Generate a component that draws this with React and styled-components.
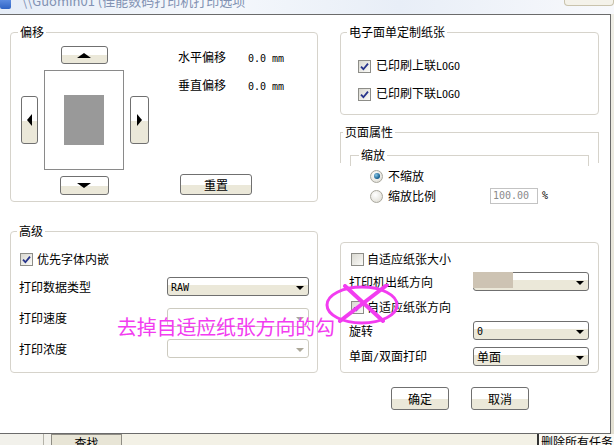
import React from 'react';
import styled, { createGlobalStyle } from 'styled-components';

const UiFont = `"Noto Sans CJK SC", "Liberation Sans", sans-serif`;
const AsciiFont = `"DejaVu Sans Mono", "Liberation Mono", monospace`;
const GroupLine = '#d6d3cb';

const GlobalStyle = createGlobalStyle`
  html, body { margin: 0; padding: 0; background: #fff; }
  body { font-family: ${UiFont}; font-size: 12px; color: #000; }
`;

const Screen = styled.div`
  position: relative;
  width: 614px;
  height: 445px;
  overflow: hidden;
  display: flex;
  flex-direction: column;
  background: #f1f0ea;
  font-family: ${UiFont};
  font-size: 12px;
  line-height: 14px;
`;

const TitleBar = styled.div`
  flex: none;
  height: 14px;
  display: flex;
  align-items: flex-start;
  overflow: hidden;
  background: linear-gradient(90deg, #e6edf7, #f5f8fc 35%, #e8eef7 65%, #f8f9fc);
`;

const TitleIcon = styled.div`
  width: 11px;
  height: 9px;
  background: linear-gradient(#5b8be0, #2f63c4);
  border-radius: 0 0 2px 2px;
`;

const TitleText = styled.div`
  margin-left: 11px;
  margin-top: -7px;
  font-size: 13px;
  line-height: 15px;
  color: #8292b3;
  white-space: nowrap;
`;

const TitleButton = styled.div`
  margin-left: auto;
  width: 48px;
  height: 5px;
  border: 1px solid #c9c3ad;
  border-top: none;
  border-radius: 0 0 4px 4px;
  background: #f4f2ea;
`;

const Middle = styled.div`
  flex: none;
  height: 420px;
  display: flex;
`;

const Dialog = styled.div`
  width: 611px;
  box-sizing: border-box;
  border: 1px solid #6b6b6b;
  border-left: none;
  background: #fff;
  padding: 10px 11px 0 10px;
  display: flex;
  flex-direction: column;
`;

const EdgeStrip = styled.div`
  flex: 1;
  background: linear-gradient(#efeee6, #e3e0d2);
`;

const Columns = styled.div`
  display: grid;
  grid-template-columns: 308px 259px;
  column-gap: 22px;
  align-items: start;
`;

const Column = styled.div`
  display: flex;
  flex-direction: column;
  gap: ${p => p.$gap}px;
`;

const Group = styled.fieldset`
  margin: 0;
  padding: 0;
  min-width: 0;
  border: 1px solid ${GroupLine};
  border-radius: 4px;
`;

const OpenGroup = styled.fieldset`
  margin: 0;
  padding: 0;
  min-width: 0;
  border: none;
  border-top: 1px solid ${GroupLine};
  background:
    linear-gradient(${GroupLine}, ${GroupLine}) left top / 1px ${p => p.$side}px no-repeat,
    linear-gradient(${GroupLine}, ${GroupLine}) right top / 1px ${p => p.$side}px no-repeat;
`;

const Legend = styled.legend`
  padding: 0 2px;
  margin-left: ${p => p.$at}px;
  font-size: 12px;
  line-height: 14px;
`;

const GroupBody = styled.div`
  padding: ${p => p.$pad};
  display: flex;
  flex-direction: ${p => (p.$row ? 'row' : 'column')};
`;

const Pad = styled.div`
  display: grid;
  grid-template-columns: 17px 80px 19px;
  grid-template-rows: 18px 100px 19px;
  grid-template-areas:
    '. up .'
    'left paper right'
    '. down .';
  gap: 6px;
  place-items: center;
`;

const Button = styled.div`
  box-sizing: border-box;
  width: ${p => p.$w}px;
  height: ${p => p.$h}px;
  border: 1px solid #707070;
  border-radius: 3px;
  background: linear-gradient(#fff 0 52%, #ebe8d9 52%);
  display: flex;
  align-items: center;
  justify-content: center;
  font-size: 12px;
  grid-area: ${p => p.$area || 'auto'};
`;

const Tri = styled.span`
  width: 0;
  height: 0;
  border: ${p => p.$s}px solid transparent;
  ${p => p.$dir === 'up' && `border-bottom: ${p.$s}px solid #000; border-top-width: 0; border-left-width: ${p.$s + 2}px; border-right-width: ${p.$s + 2}px;`}
  ${p => p.$dir === 'down' && `border-top: ${p.$s}px solid #000; border-bottom-width: 0; border-left-width: ${p.$s + 2}px; border-right-width: ${p.$s + 2}px;`}
  ${p => p.$dir === 'left' && `border-right: ${p.$s}px solid #000; border-left-width: 0; border-top-width: ${p.$s + 1}px; border-bottom-width: ${p.$s + 1}px;`}
  ${p => p.$dir === 'right' && `border-left: ${p.$s}px solid #000; border-right-width: 0; border-top-width: ${p.$s + 1}px; border-bottom-width: ${p.$s + 1}px;`}
`;

const Paper = styled.div`
  grid-area: paper;
  width: 80px;
  height: 100px;
  box-sizing: border-box;
  border: 1px solid #8a8a8a;
  background: #fff;
  display: flex;
  align-items: center;
  justify-content: center;
`;

const PrintArea = styled.div`
  width: 40px;
  height: 50px;
  background: #999;
`;

const OffsetInfo = styled.div`
  margin-left: 29px;
  display: flex;
  flex-direction: column;
  align-items: flex-start;
  flex: 1;
`;

const InfoRow = styled.div`
  display: flex;
  height: 14px;
  align-items: baseline;
  margin-top: ${p => p.$mt}px;
`;

const InfoLabel = styled.span`
  width: 70px;
`;

const Ascii = styled.span`
  font-family: ${AsciiFont};
  font-size: 10px;
  color: ${p => p.$color || '#000'};
`;

const ResetRow = styled.div`
  margin-top: auto;
  padding-left: 2px;
`;

const CheckRow = styled.div`
  display: flex;
  align-items: center;
  height: 14px;
  gap: ${p => p.$gap ?? 5}px;
  margin-top: ${p => p.$mt || 0}px;
  margin-left: ${p => p.$ml || 0}px;
`;

const Label = styled.span`
  white-space: nowrap;
  line-height: 14px;
`;

const CheckBox = styled.span`
  flex: none;
  box-sizing: border-box;
  width: 13px;
  height: 13px;
  border: 1px solid #8d8d88;
  background: linear-gradient(135deg, #d9d8d1, #fbfbf8);
  display: flex;
  align-items: center;
  justify-content: center;
`;

const RadioDot = styled.span`
  flex: none;
  box-sizing: border-box;
  width: 13px;
  height: 13px;
  border-radius: 50%;
  border: 1px solid #a9a79d;
  background: radial-gradient(circle at 40% 35%, #fff, #dad8ce);
  display: flex;
  align-items: center;
  justify-content: center;
  &::after {
    content: '';
    display: ${p => (p.$on ? 'block' : 'none')};
    width: 6px;
    height: 6px;
    border-radius: 50%;
    background: radial-gradient(circle at 35% 35%, #86c6e6, #11598a 70%);
  }
`;

const FieldRow = styled.div`
  display: flex;
  align-items: center;
  height: ${p => p.$h || 19}px;
  margin-top: ${p => p.$mt || 0}px;
  gap: ${p => p.$gap || 0}px;
`;

const Select = styled.div`
  position: relative;
  box-sizing: border-box;
  margin-left: auto;
  width: ${p => p.$w}px;
  height: 19px;
  border: 1px solid ${p => (p.$off ? '#cdcbc0' : '#6f6f6f')};
  border-radius: 3px;
  background: ${p => (p.$off ? '#fff' : 'linear-gradient(#fff 0 40%, #ebe8d9 40%)')};
  display: flex;
  align-items: center;
  justify-content: space-between;
  padding: 0 4px 0 3px;
`;

const SelectArrow = styled.span`
  width: 0;
  height: 0;
  border-left: 4px solid transparent;
  border-right: 4px solid transparent;
  border-top: 4px solid ${p => (p.$off ? '#aca899' : '#000')};
  margin-top: 2px;
`;

const Redaction = styled.span`
  position: absolute;
  left: -1px;
  top: -1px;
  width: 40px;
  height: 16px;
  background: #cdc3b3;
`;

const TextBox = styled.div`
  box-sizing: border-box;
  width: 48px;
  height: 16px;
  margin-left: 49px;
  border: 1px solid #c3c3c3;
  display: flex;
  align-items: center;
  padding-left: 2px;
`;

const Percent = styled.span`
  margin-left: -1px;
  font-family: ${AsciiFont};
  font-size: 10px;
`;

const LowerBox = styled.div`
  margin-top: 38px;
  border: 1px solid ${GroupLine};
  border-radius: 4px;
  padding: 9px 9px 6px 8px;
  display: flex;
  flex-direction: column;
`;

const ButtonBar = styled.div`
  margin-top: 14px;
  margin-right: 70px;
  display: flex;
  justify-content: flex-end;
  gap: 22px;
`;

const TaskBar = styled.div`
  flex: 1;
  display: flex;
  align-items: stretch;
  overflow: hidden;
  background: #f2f1eb;
`;

const TaskSep = styled.div`
  width: 1px;
  margin-left: 43px;
  background: #b4b2a8;
`;

const TaskButton = styled.div`
  margin-left: 7px;
  width: 71px;
  box-sizing: border-box;
  border: 1px solid #8f8d85;
  border-bottom: none;
  background: #e8e5d6;
  text-align: center;
  line-height: 14px;
  padding-top: 1px;
`;

const TaskFill = styled.div`
  flex: 1;
  background: #f3f1e6;
`;

const TaskRight = styled.div`
  width: 77px;
  box-sizing: border-box;
  border-left: 2px solid #333;
  padding-left: 2px;
  background: #fbfaf5;
  white-space: nowrap;
  line-height: 14px;
  padding-top: 1px;
  font-size: 12px;
`;

const Note = styled.div`
  position: absolute;
  left: 117px;
  top: 316px;
  font-size: 20px;
  line-height: 22px;
  letter-spacing: -0.2px;
  color: #f23cf0;
  white-space: nowrap;
`;

const NoteMark = styled.svg`
  position: absolute;
  left: 324px;
  top: 284px;
`;

const Check = ({ on }) => (
  <CheckBox>
    {on && (
      <svg width="9" height="9" viewBox="0 0 9 9">
        <path d="M1 4.6 L3.4 7.2 L8 1.6" fill="none" stroke="#27348b" strokeWidth="1.8" />
      </svg>
    )}
  </CheckBox>
);

const Dropdown = ({ w, off, children, redacted }) => (
  <Select $w={w} $off={off}>
    {redacted && <Redaction />}
    <span>{children}</span>
    <SelectArrow $off={off} />
  </Select>
);

export default function App() {
  return (
    <>
      <GlobalStyle />
      <Screen>
        <TitleBar>
          <TitleIcon />
          <TitleText>{'\\\\Guomin01 (佳能数码打印机打印选项'}</TitleText>
          <TitleButton />
        </TitleBar>

        <Middle>
          <Dialog>
            <Columns>
              <Column $gap={22}>
                <Group>
                  <Legend $at={7}>偏移</Legend>
                  <GroupBody $row $pad="7px 0 6px 10px">
                    <Pad>
                      <Button $area="up" $w={47} $h={18}><Tri $dir="up" $s={5} /></Button>
                      <Button $area="left" $w={17} $h={48}><Tri $dir="left" $s={5} /></Button>
                      <Paper><PrintArea /></Paper>
                      <Button $area="right" $w={19} $h={48}><Tri $dir="right" $s={5} /></Button>
                      <Button $area="down" $w={49} $h={19}><Tri $dir="down" $s={5} /></Button>
                    </Pad>
                    <OffsetInfo>
                      <InfoRow $mt={4}><InfoLabel>水平偏移</InfoLabel><Ascii>0.0 mm</Ascii></InfoRow>
                      <InfoRow $mt={14}><InfoLabel>垂直偏移</InfoLabel><Ascii>0.0 mm</Ascii></InfoRow>
                      <ResetRow><Button $w={72} $h={21}>重置</Button></ResetRow>
                    </OffsetInfo>
                  </GroupBody>
                </Group>

                <Group>
                  <Legend $at={6}>高级</Legend>
                  <GroupBody $pad="14px 8px 14px 8px">
                    <CheckRow $ml={1} $gap={4}><Check on /><Label>优先字体内嵌</Label></CheckRow>
                    <FieldRow $mt={11}>打印数据类型<Dropdown w={142}><Ascii>RAW</Ascii></Dropdown></FieldRow>
                    <FieldRow $mt={12}>打印速度<Dropdown w={142} off /></FieldRow>
                    <FieldRow $mt={12}>打印浓度<Dropdown w={142} off /></FieldRow>
                  </GroupBody>
                </Group>
              </Column>

              <Column $gap={10}>
                <Group>
                  <Legend $at={6}>电子面单定制纸张</Legend>
                  <GroupBody $pad="20px 0 13px 17px">
                    <CheckRow><Check on /><Label>已印刷上联<Ascii>LOGO</Ascii></Label></CheckRow>
                    <CheckRow $mt={14}><Check on /><Label>已印刷下联<Ascii>LOGO</Ascii></Label></CheckRow>
                  </GroupBody>
                </Group>

                <div>
                  <OpenGroup $side={30}>
                    <Legend $at={3}>页面属性</Legend>
                    <GroupBody $pad="9px 10px 0 10px">
                      <OpenGroup $side={10}>
                        <Legend $at={9}>缩放</Legend>
                        <GroupBody $pad="7px 0 0 20px">
                          <CheckRow>
                            <RadioDot $on /><Label>不缩放</Label>
                          </CheckRow>
                          <FieldRow $h={16} $mt={5} $gap={5}>
                            <RadioDot /><Label>缩放比例</Label>
                            <TextBox><Ascii $color="#8a8a8a">100.00</Ascii></TextBox>
                            <Percent>%</Percent>
                          </FieldRow>
                        </GroupBody>
                      </OpenGroup>
                    </GroupBody>
                  </OpenGroup>

                  <LowerBox>
                    <CheckRow $ml={2} $gap={3}><Check /><Label>自适应纸张大小</Label></CheckRow>
                    <FieldRow $mt={6}>打印机出纸方向<Dropdown w={116} redacted /></FieldRow>
                    <CheckRow $ml={2} $gap={3} $mt={9}><Check on /><Label>自适应纸张方向</Label></CheckRow>
                    <FieldRow $mt={7}>旋转<Dropdown w={116}><Ascii>0</Ascii></Dropdown></FieldRow>
                    <FieldRow $mt={7}><Label>单面<Ascii>/</Ascii>双面打印</Label><Dropdown w={116}>单面</Dropdown></FieldRow>
                  </LowerBox>
                </div>
              </Column>
            </Columns>

            <ButtonBar>
              <Button $w={58} $h={23}>确定</Button>
              <Button $w={58} $h={23}>取消</Button>
            </ButtonBar>
          </Dialog>
          <EdgeStrip />
        </Middle>

        <TaskBar>
          <TaskSep />
          <TaskButton>查找</TaskButton>
          <TaskFill />
          <TaskRight>删除所有任务</TaskRight>
        </TaskBar>

        <Note>去掉自适应纸张方向的勾</Note>
        <NoteMark width="78" height="44" viewBox="0 0 78 44">
          <ellipse cx="38" cy="21" rx="35" ry="18" fill="none" stroke="#f23cf0" strokeWidth="3" />
          <path d="M21 2 L59 37 M63 1 L16 37" stroke="#f23cf0" strokeWidth="4" strokeLinecap="round" />
        </NoteMark>
      </Screen>
    </>
  );
}
